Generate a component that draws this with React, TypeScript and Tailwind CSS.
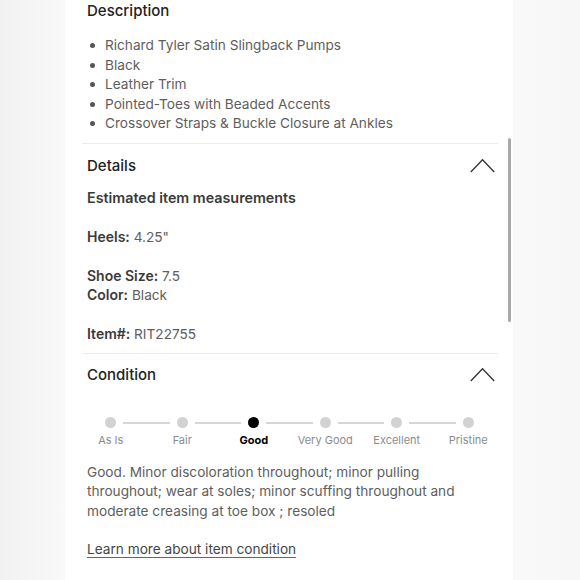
import { useState } from "react";

const bullets = [
  "Richard Tyler Satin Slingback Pumps",
  "Black",
  "Leather Trim",
  "Pointed-Toes with Beaded Accents",
  "Crossover Straps & Buckle Closure at Ankles",
];

const steps = ["As Is", "Fair", "Good", "Very Good", "Excellent", "Pristine"];

const Chevron = () => (
  <svg width="25" height="15" viewBox="0 0 25 15" fill="none" className="flex-shrink-0 -mr-[2px] -mt-[3px]">
    <polyline points="0.8,14 12.5,1.8 24.2,14" stroke="#333" strokeWidth="1.3" />
  </svg>
);

const Field = ({ label, value }: { label: string; value: string }) => (
  <div className="h-[19.5px] leading-[19.5px]">
    <span className="font-semibold text-[14px] text-[#3a3a3a]">{label}</span>{" "}
    <span className="text-[#5e5e5e]">{value}</span>
  </div>
);

export default function App() {
  const [current] = useState(2);

  return (
    <div
      className="w-[580px] h-[580px] overflow-hidden flex bg-[#f8f8f8] relative"
      style={{ fontFamily: "Inter, 'Liberation Sans', sans-serif" }}
    >
      {/* left gutter */}
      <div className="w-[65px] h-full bg-gradient-to-r from-[#f1f1f1] to-[#f9f9f9]" />

      {/* main column */}
      <div className="w-[448px] h-full bg-white pl-[17px] pr-[15px] text-[13.65px] antialiased">
        {/* Description */}
        <div className="px-[5px]">
          <div className="mt-[1px] h-[20px] leading-[20px] text-[15px] font-medium text-[#222]">
            Description
          </div>
          <ul className="mt-[15px] text-[#5e5e5e]">
            {bullets.map((b) => (
              <li key={b} className="h-[19.5px] leading-[19.5px] flex items-center">
                <span className="w-[5px] h-[5px] rounded-full bg-[#555] ml-[3px] mr-[10px]" />
                {b}
              </li>
            ))}
          </ul>
        </div>

        <div className="mt-[9px] h-px bg-[#ececec]" />

        {/* Details */}
        <div className="px-[5px]">
          <div className="mt-[13px] h-[20px] flex items-center justify-between">
            <span className="text-[15px] font-medium text-[#222]">Details</span>
            <Chevron />
          </div>
          <div className="mt-[11px] h-[19.5px] leading-[19.5px] text-[14.3px] font-semibold text-[#3a3a3a]">
            Estimated item measurements
          </div>
          <div className="h-[19.5px]" />
          <Field label="Heels:" value={'4.25"'} />
          <div className="h-[19.5px]" />
          <Field label="Shoe Size:" value="7.5" />
          <Field label="Color:" value="Black" />
          <div className="h-[19.5px]" />
          <Field label="Item#:" value="RIT22755" />
        </div>

        <div className="mt-[9px] h-px bg-[#ececec]" />

        {/* Condition */}
        <div className="px-[5px]">
          <div className="mt-[12px] h-[20px] flex items-center justify-between">
            <span className="text-[15px] font-medium text-[#222]">Condition</span>
            <Chevron />
          </div>

          <div className="mt-[31px] -ml-[12px] flex">
            {steps.map((s, i) => (
              <div key={s} className="w-[71.5px] flex-shrink-0 flex flex-col items-center">
                <div className="w-full h-[12px] flex items-center">
                  <div className={`flex-1 h-[2px] ${i === 0 ? "" : "bg-[#d6d6d6]"}`} />
                  <div
                    className={`mx-[7px] w-[11px] h-[11px] rounded-full ${
                      i === current ? "bg-black" : "bg-[#d2d2d2]"
                    }`}
                  />
                  <div className={`flex-1 h-[2px] ${i === steps.length - 1 ? "" : "bg-[#d6d6d6]"}`} />
                </div>
                <div
                  className={`mt-[4px] text-[11px] leading-[14px] ${
                    i === current ? "font-bold text-black" : "text-[#8c8c8c]"
                  }`}
                >
                  {s}
                </div>
              </div>
            ))}
          </div>

          <p className="mt-[16px] leading-[19.5px] text-[#5e5e5e] w-[380px]">
            Good. Minor discoloration throughout; minor pulling throughout; wear at soles; minor scuffing
            throughout and moderate creasing at toe box ; resoled
          </p>

          <a className="block mt-[18.5px] leading-[19.5px] text-[#444] underline underline-offset-[3px] decoration-[#666]">
            Learn more about item condition
          </a>
        </div>
      </div>

      {/* right gutter */}
      <div className="flex-1 h-full bg-gradient-to-r from-[#f9f9f9] to-[#f7f7f7]" />

      {/* scrollbar thumb */}
      <div className="absolute left-[508px] top-[138px] w-[3px] h-[184px] rounded-full bg-[#a9a9a9]" />
    </div>
  );
}
